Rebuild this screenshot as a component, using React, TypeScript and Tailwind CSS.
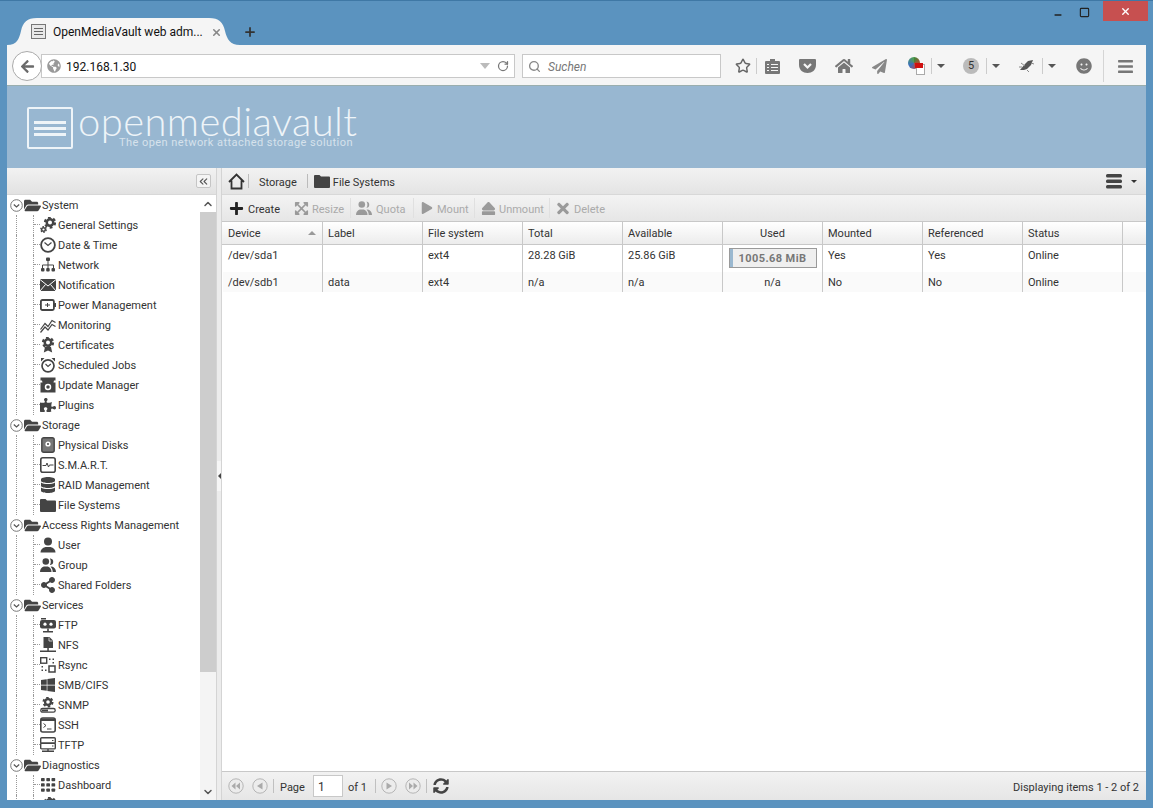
import React from "react";
import { FaPuzzlePiece, FaDatabase, FaShareAlt, FaWindows, FaFolderOpen, FaHome, FaPaperPlane, FaPlus, FaPlay, FaEject, FaTimes, FaExpandArrowsAlt, FaBars, FaSyncAlt, FaArrowLeft, FaSmile, FaGlobeAmericas } from "react-icons/fa";
import { ChevronUp, ChevronDown, ChevronsLeft, Star, RotateCw, Search, X, Plus, Minus, Square } from "lucide-react";

const C = "#444444";
const S = ({ children, size = 16 }: { children: React.ReactNode; size?: number }) => (
  <svg width={size} height={size} viewBox="0 0 16 16" className="shrink-0" fill={C} stroke="none">{children}</svg>
);
const Gear = ({ x, y, r }: { x: number; y: number; r: number }) => (
  <g>
    <circle cx={x} cy={y} r={r} fill="none" stroke={C} strokeWidth={r * 0.45} strokeDasharray={`${r * 0.55} ${r * 0.5}`} />
    <circle cx={x} cy={y} r={r * 0.65} fill="none" stroke={C} strokeWidth={r * 0.5} />
  </g>
);
const Users = (
  <S>
    <circle cx="5.800" cy="4.500" r="3.300" />
    <path d="M0 15c0-3 1.500-4.500 3.800-5.500h4C10 10.500 11.500 12 11.500 15z" />
    <path d="M10.500 1.500a3.300 3.300 0 0 1 0 6.500c-.3 0-.6 0-.6 0 .6-1 .9-2 .9-3.200s-.3-2.300-.9-3.200zM12 9.500c2.300 1 4 2.500 4 5.500h-3.300c0-2.200-.8-4-2.200-5.200z" />
  </S>
);
const Ico: Record<string, React.ReactNode> = {
  gear: <S><Gear x={10} y={5.500} r={5} /><Gear x={3.500} y={12.500} r={2.800} /></S>,
  clock: <S><circle cx="8" cy="8" r="6.900" fill="none" stroke={C} strokeWidth="1.800" /><path d="M4.500 5.500 8 8.500 11.500 5.500" fill="none" stroke={C} strokeWidth="1.200" /></S>,
  net: <S><rect x="6" y="0.500" width="4" height="3.500" rx="1" /><path d="M8 4v4M2.500 11V8h11v3M8 8v3" fill="none" stroke={C} strokeWidth="1" /><rect x="1" y="11" width="3.500" height="3.500" rx="1" /><rect x="6.200" y="11" width="3.500" height="3.500" rx="1" /><rect x="11.500" y="11" width="3.500" height="3.500" rx="1" /></S>,
  mail: <S><rect x="0" y="2" width="16" height="12" /><path d="M0 2.500 8 9l8-6.500M0 14l5.500-6.500M16 14l-5.500-6.500" fill="none" stroke="#fff" strokeWidth="1" /></S>,
  power: <S><rect x="0.900" y="3" width="13" height="10" rx="1.500" fill="none" stroke={C} strokeWidth="1.800" /><path d="M14.500 6.500H16v3h-1.500zM5 8h5M7.500 6v4" stroke={C} strokeWidth="1" /></S>,
  mon: <S><path d="M0.500 12.500 5 6.500l3 3 4-6 3.500 2" fill="none" stroke={C} strokeWidth="1.200" /><path d="M0.500 15.500 5 10l3 3 4-5.500 3.500 2" fill="none" stroke={C} strokeWidth="1.200" /></S>,
  cert: <S><Gear x={8} y={5.500} r={5} /><path d="M5 10 3.800 15.500 8 13.500l4.200 2L11 10z" /></S>,
  sched: <S><circle cx="8" cy="8.800" r="6" fill="none" stroke={C} strokeWidth="1.700" /><path d="M5.500 7 8 9.500 10.800 7" fill="none" stroke={C} strokeWidth="1.100" /><path d="M1 4.500 4.500 1 1 1zM15 4.500 11.500 1 15 1z" /></S>,
  upd: <S><path d="M0.500 0.500h15v3H14l-.5 2h2v10H.5v-10h2L2 3.500H.5z" /><circle cx="8" cy="10" r="2.500" fill="none" stroke="#fff" strokeWidth="1.500" /></S>,
  disk: <S><rect x="1.800" y="0.700" width="12.400" height="14.600" rx="2" fill="#777" stroke={C} strokeWidth="1.400" /><circle cx="8" cy="7" r="2.600" fill="#fff" /><circle cx="8" cy="7" r="1" fill={C} /></S>,
  smart: <S><rect x="0.800" y="0.800" width="14.400" height="14.400" rx="2" fill="none" stroke={C} strokeWidth="1.600" /><path d="M2.500 8.500H6l1-2.500 1.500 4 1-2h4" fill="none" stroke={C} strokeWidth="1" /></S>,
  folder: <S><path d="M0 3a1 1 0 0 1 1-1h4.500l1.500 1.500h8a1 1 0 0 1 1 1V14a1 1 0 0 1-1 1H1a1 1 0 0 1-1-1z" /></S>,
  ftp: <S><path d="M1 1h5v1.500H1z" /><rect x="0" y="3" width="16" height="8.500" rx="2" /><circle cx="5" cy="7.200" r="1.600" fill="#fff" /><circle cx="11" cy="7.200" r="1.600" fill="#fff" /><path d="M7.200 11.500h1.600V14H13v1.500H3V14h4.200z" /></S>,
  nfs: <S><path d="M3.500 0h6L13 3.500V11H3.500z" /><path d="M9 .5v3.500h3.500" fill="none" stroke="#fff" strokeWidth=".7" /><path d="M7.300 11h1.500v2.500H16V15H0v-1.500h7.300z" /></S>,
  rsync: <S><rect x="0.700" y="0.700" width="6" height="5.500" fill="none" stroke={C} strokeWidth="1.400" /><rect x="9" y="9" width="6" height="6" fill="none" stroke={C} strokeWidth="1.500" /><path d="M9 1.500h1.500V3H9zM12.500 1.500H14V3h-1.500zM12.500 5h1.500v1.500h-1.500zM1.500 9H3v1.500H1.500zM1.500 12.500H3V14H1.500zM5 12.500h1.500V14H5z" /></S>,
  snmp: <S><Gear x={8} y={5} r={4.500} /><rect x="0.800" y="11.500" width="14.400" height="3.700" rx="1.800" fill="none" stroke={C} strokeWidth="1.300" /><rect x="2" y="12.500" width="6" height="2" /></S>,
  ssh: <S><rect x="0.800" y="1" width="14.400" height="14" rx="2" fill="none" stroke={C} strokeWidth="1.600" /><path d="M1 1.500h14V4H1z" /><path d="M3.500 6.500 6 8.500 3.500 10.500M7 12h4.500" fill="none" stroke={C} strokeWidth="1" /></S>,
  tftp: <S><rect x="0.700" y="0.700" width="14.600" height="5.600" rx="1" fill="none" stroke={C} strokeWidth="1.400" /><rect x="0.700" y="6.300" width="14.600" height="5.600" rx="1" fill="none" stroke={C} strokeWidth="1.400" /><path d="M12 3h1.500v1H12zM12 8.500h1.500v1H12zM7.300 12h1.400v1.500H14V15H2v-1.500h5.300z" /></S>,
  dash: <S>{[1, 6.300, 11.500].flatMap((y) => [1, 6.300, 11.500].map((x) => <rect key={`${x}${y}`} x={x} y={y} width="3.700" height="3.300" rx=".7" />))}</S>,
  plug: <FaPuzzlePiece size={16} color={C} className="shrink-0" />,
  raid: <FaDatabase size={16} color={C} className="shrink-0" />,
  user: <S><circle cx="8" cy="4.500" r="4" /><path d="M0.500 15.500c0-3 2-4.500 5-5.500h5c3 1 5 2.500 5 5.500z" /></S>,
  group: Users,
  share: <FaShareAlt size={16} color={C} className="shrink-0" />,
  smb: <FaWindows size={16} color={C} className="shrink-0" />,
};

type Row = { root?: boolean; t: string; i?: string };
const rows: Row[] = [
  { root: true, t: "System" },
  { t: "General Settings", i: "gear" }, { t: "Date & Time", i: "clock" }, { t: "Network", i: "net" }, { t: "Notification", i: "mail" },
  { t: "Power Management", i: "power" }, { t: "Monitoring", i: "mon" }, { t: "Certificates", i: "cert" }, { t: "Scheduled Jobs", i: "sched" },
  { t: "Update Manager", i: "upd" }, { t: "Plugins", i: "plug" },
  { root: true, t: "Storage" },
  { t: "Physical Disks", i: "disk" }, { t: "S.M.A.R.T.", i: "smart" }, { t: "RAID Management", i: "raid" }, { t: "File Systems", i: "folder" },
  { root: true, t: "Access Rights Management" },
  { t: "User", i: "user" }, { t: "Group", i: "group" }, { t: "Shared Folders", i: "share" },
  { root: true, t: "Services" },
  { t: "FTP", i: "ftp" }, { t: "NFS", i: "nfs" }, { t: "Rsync", i: "rsync" }, { t: "SMB/CIFS", i: "smb" }, { t: "SNMP", i: "snmp" }, { t: "SSH", i: "ssh" }, { t: "TFTP", i: "tftp" },
  { root: true, t: "Diagnostics" },
  { t: "Dashboard", i: "dash" }, { t: "", i: "gear" },
];

function TreeRow({ r }: { r: Row }) {
  if (r.root)
    return (
      <div className="flex h-5 shrink-0 items-center pl-[3px]">
        <svg width="13" height="13" viewBox="0 0 13 13" className="shrink-0">
          <circle cx="6.500" cy="6.500" r="5.800" fill="#fff" stroke="#777" strokeWidth="1" />
          <path d="M3.800 5.500 6.500 8l2.700-2.500" fill="none" stroke="#555" strokeWidth="1.200" />
        </svg>
        <FaFolderOpen size={17} color={C} className="ml-[1px] shrink-0" />
        <span className="ml-[1px] whitespace-nowrap pt-[2px]">{r.t}</span>
      </div>
    );
  return (
    <div className="flex h-5 shrink-0 items-center pl-[9px]">
      <div className="h-full w-[17px] shrink-0 border-l border-dotted border-[#999]" />
      <div className="h-full w-[7px] shrink-0 border-l border-dotted border-[#999]">
        <div className="h-[10px] border-b border-dotted border-[#999]" />
      </div>
      <span className="flex w-[16px] shrink-0 items-center justify-center">{Ico[r.i!]}</span>
      <span className="ml-[2px] whitespace-nowrap pt-[2px]">{r.t}</span>
    </div>
  );
}

const cols = [
  { t: "Device", sort: true }, { t: "Label" }, { t: "File system" }, { t: "Total" }, { t: "Available" },
  { t: "Used", c: true }, { t: "Mounted" }, { t: "Referenced" }, { t: "Status" },
];
const data = [
  ["/dev/sda1", "", "ext4", "28.28 GiB", "25.86 GiB", "BAR", "Yes", "Yes", "Online"],
  ["/dev/sdb1", "data", "ext4", "n/a", "n/a", "n/a", "No", "No", "Online"],
];

const TB = ({ icon, label, off, w, sep, gap = "gap-[3px]" }: { icon: React.ReactNode; label: string; off?: boolean; w: string; sep?: boolean; gap?: string }) => (
  <div className={`flex h-[22px] shrink-0 items-center ${gap} ${w}`}>
    <span className={`flex w-4 justify-center ${off ? "opacity-40" : ""}`}>{icon}</span>
    <span className={`pt-[3px] ${off ? "text-[#aaa]" : ""}`}>{label}</span>
    {sep && <span className="ml-auto mr-[5px] h-[20px] w-px bg-[#e0e0e0]" />}
  </div>
);
const PagerBtn = ({ d }: { d: string }) => (
  <svg width="16" height="16" viewBox="0 0 16 16" className="shrink-0">
    <circle cx="8" cy="8" r="7.200" fill="#ececec" stroke="#b5b5b5" strokeWidth="1" />
    <path d={d} fill="#aaa" />
  </svg>
);
const Caret = () => <div className="h-0 w-0 border-x-[4px] border-t-[4px] border-x-transparent border-t-[#555]" />;

export default function App() {
  return (
    <div className="flex h-[808px] w-[1153px] flex-col overflow-hidden border-t border-[#3f78a5] bg-[#5b93bf] font-['Roboto','Liberation_Sans',sans-serif] text-[11px] leading-[16px] text-[#333]">
      {/* title bar */}
      <div className="flex h-[44px] shrink-0 items-start">
        <div className="flex flex-1 items-start pl-[7px] pt-[17px]">
          <div className="relative flex h-[27px] w-[233px] items-center pl-[24px] pr-[20px]">
            <svg width="233" height="27" viewBox="0 0 233 27" className="absolute left-0 top-0">
              <path d="M0 27c10 0 12-6 14-14C16 4 20 0 30 0h172c10 0 14 4 16 13 2 8 5 14 15 14z" fill="#f5f5f5" />
            </svg>
            <span className="relative flex h-[15px] w-[15px] shrink-0 flex-col justify-center gap-[2px] border border-[#777] bg-[#e8e8e8] px-[2px]">
              <i className="h-px bg-[#666]" /><i className="h-px bg-[#666]" /><i className="h-px bg-[#666]" />
            </span>
            <span className="relative ml-[7px] whitespace-nowrap text-[12px] text-[#111]">OpenMediaVault web adm...</span>
            <X size={11} strokeWidth={3.500} color="#888" className="absolute left-[204px] top-[9px]" />
          </div>
          <Plus size={14} strokeWidth={3} color="#333" className="ml-[3px] mt-[7px]" />
        </div>
        <div className="flex items-start pr-[5px]">
          <Minus size={10} strokeWidth={3.500} color="#222" className="mr-[16px] mt-[9px]" />
          <Square size={11} strokeWidth={2.500} color="#222" className="mr-[13px] mt-[6px]" />
          <div className="flex h-[20px] w-[45px] items-center justify-center bg-[#c75050]">
            <X size={11} strokeWidth={3} color="#fff" />
          </div>
        </div>
      </div>

      {/* browser content */}
      <div className="mx-[7px] flex min-h-0 flex-1 flex-col">
        {/* nav bar */}
        <div className="flex h-[41px] shrink-0 items-center border-b border-[#9aaeae] bg-[#f5f5f5] pl-[5px] pt-[2px]">
          <div className="z-10 flex h-[30px] w-[30px] shrink-0 items-center justify-center rounded-full border border-[#aaa] bg-white">
            <FaArrowLeft size={15} color="#6a6a6a" />
          </div>
          <div className="-ml-[1px] flex h-[24px] w-[474px] items-center border border-[#c8c8c8] bg-white pl-[5px]">
            <FaGlobeAmericas size={14} color="#999" />
            <span className="ml-[5px] flex-1 pt-[2px] text-[12px] text-[#111]">192.168.1.30</span>
            <div className="mr-[7px] h-0 w-0 border-x-[5px] border-t-[6px] border-x-transparent border-t-[#bbb]" />
            <RotateCw size={12} strokeWidth={2.500} color="#777" className="mr-[5px]" />
          </div>
          <div className="ml-[7px] flex h-[24px] w-[199px] items-center border border-[#c8c8c8] bg-white pl-[5px]">
            <Search size={13} strokeWidth={2.500} color="#888" />
            <span className="ml-[7px] pt-[2px] text-[12px] italic text-[#777]">Suchen</span>
          </div>
          <div className="ml-[13px] flex h-full flex-1 items-center">
            <Star size={16} strokeWidth={2.200} color="#666" className="ml-[1px]" />
            <div className="ml-[5px] h-[16px] w-px bg-[#ccc]" />
            <svg width="15" height="16" viewBox="0 0 15 16" className="ml-[8px]"><path d="M1 3h4V1h5v2h4a1 1 0 0 1 1 1v11a1 1 0 0 1-1 1H1a1 1 0 0 1-1-1V4a1 1 0 0 1 1-1z" fill="#777" /><path d="M2 6.500h2M6 6.500h7M2 9.500h2M6 9.500h7M2 12.500h2M6 12.500h7" stroke="#f5f5f5" strokeWidth="1.200" /></svg>
            <svg width="17" height="16" viewBox="0 0 17 16" className="ml-[19px]"><path d="M1 1h15a1 1 0 0 1 1 1v5c0 5-4 8-8.500 8S0 12 0 7V2a1 1 0 0 1 1-1z" fill="#777" /><path d="M5 6l3.500 3.500L12 6" fill="none" stroke="#f5f5f5" strokeWidth="2.200" /></svg>
            <FaHome size={18} color="#777" className="ml-[19px]" />
            <FaPaperPlane size={15} color="#888" className="ml-[19px]" />
            <span className="relative ml-[21px] h-[18px] w-[17px]">
              <span className="block h-[12px] w-[12px] rounded-full bg-[conic-gradient(#3a8a3a,#d04030,#3a6fc0,#50a050)]" />
              <span className="absolute bottom-0 right-0 h-[11px] w-[9px] border border-[#aaa] bg-white" />
              <span className="absolute right-[2px] top-[6px] h-[5px] w-[8px] bg-[#d01010]" />
            </span>
            <div className="ml-[6px] h-[16px] w-px bg-[#ccc]" />
            <span className="ml-[5px]"><Caret /></span>
            <span className="ml-[18px] flex h-[16px] w-[16px] items-center justify-center rounded-full bg-[#bbb] text-[11px] text-[#333]">5</span>
            <div className="ml-[7px] h-[16px] w-px bg-[#ccc]" />
            <span className="ml-[5px]"><Caret /></span>
            <svg width="16" height="14" viewBox="0 0 16 14" className="ml-[19px]"><path d="M1 11 6 5l3-3 5-1-2 5-4 4-3 1z" fill="#555" /><path d="M2 4l4 3M8 11l2 2M12 4l3 1M3 8 0 8" stroke="#888" strokeWidth="1" /></svg>
            <div className="ml-[7px] h-[16px] w-px bg-[#ccc]" />
            <span className="ml-[5px]"><Caret /></span>
            <FaSmile size={16} color="#777" className="ml-[20px]" />
            <div className="ml-[11px] h-[32px] w-px bg-[#d5d5d5]" />
            <FaBars size={17} color="#777" className="ml-[13px]" />
          </div>
        </div>

        {/* OMV header */}
        <div className="flex h-[82px] shrink-0 items-start bg-[#98b7d1] pl-[20px] pt-[21px]">
          <div className="flex h-[42px] w-[46px] shrink-0 flex-col justify-center gap-[3px] rounded-[2px] border-2 border-[#eef4f8] px-[5px]">
            <i className="h-[3px] bg-[#eef4f8]" /><i className="h-[3px] bg-[#eef4f8]" /><i className="h-[3px] bg-[#eef4f8]" />
          </div>
          <div className="ml-[5px] flex flex-col">
            <span className="-mt-[9px] h-[47px] font-['Lato',sans-serif] text-[40px] font-light leading-[47px] tracking-[0.4px] text-[#eef4f8]">openmediavault</span>
            <span className="-mt-[9px] ml-[41px] whitespace-nowrap font-['Roboto',sans-serif] text-[11px] leading-[14px] tracking-[0.45px] text-[#d6e2ec]">The open network attached storage solution</span>
          </div>
        </div>

        {/* workspace */}
        <div className="flex min-h-0 flex-1 bg-white">
          {/* left */}
          <div className="flex w-[209px] shrink-0 flex-col">
            <div className="flex h-[27px] shrink-0 items-center justify-end border-b border-[#d8d8d8] bg-gradient-to-b from-[#f2f2f2] to-[#e2e2e2] pr-[5px]">
              <div className="flex h-[14px] w-[15px] items-center justify-center rounded-[2px] border border-[#c5c5c5] bg-[#f4f4f4]">
                <ChevronsLeft size={13} strokeWidth={2} color="#555" />
              </div>
            </div>
            <div className="flex min-h-0 flex-1">
              <div className="min-w-0 flex-1 overflow-hidden">
                <div className="flex flex-col">{rows.map((r, i) => <TreeRow key={i} r={r} />)}</div>
              </div>
              <div className="flex w-[16px] shrink-0 flex-col bg-[#f4f4f4]">
                <div className="flex h-[17px] shrink-0 items-center justify-center bg-white"><ChevronUp size={12} strokeWidth={3} color="#555" /></div>
                <div className="h-[460px] shrink-0 bg-[#cdcdcd]" />
                <div className="flex-1" />
                <div className="flex h-[17px] shrink-0 items-center justify-center"><ChevronDown size={12} strokeWidth={3} color="#555" /></div>
              </div>
            </div>
          </div>

          {/* splitter */}
          <div className="flex w-[6px] shrink-0 items-center justify-center border-x border-[#d4d4d4] bg-[#ececec]">
            <div className="flex h-[30px] w-[4px] -translate-y-[8px] items-center justify-center bg-[#f6f6f6]">
              <div className="h-0 w-0 border-y-[3px] border-r-[3px] border-y-transparent border-r-[#444]" />
            </div>
          </div>

          {/* right */}
          <div className="flex min-w-0 flex-1 flex-col">
            <div className="flex h-[27px] shrink-0 items-center border-b border-[#d8d8d8] bg-gradient-to-b from-[#f2f2f2] to-[#e4e4e4] pl-[6px] pr-[9px]">
              <svg width="17" height="17" viewBox="0 0 17 17"><path d="M1 9 8.500 1.500 16 9M3.500 7.500V15.500h10V7.500" fill="none" stroke="#333" strokeWidth="1.800" /></svg>
              <div className="ml-[3px] h-[14px] w-px bg-[#bbb]" />
              <span className="ml-[10px] pt-[3px]">Storage</span>
              <div className="ml-[10px] h-[14px] w-px bg-[#bbb]" />
              <span className="ml-[6px]">{Ico.folder}</span>
              <span className="ml-[3px] pt-[3px]">File Systems</span>
              <span className="flex-1" />
              <svg width="16" height="15" viewBox="0 0 16 15"><rect width="16" height="3.500" rx="1.500" y="0" fill="#444" /><rect width="16" height="3.500" rx="1.500" y="5.500" fill="#444" /><rect width="16" height="3.500" rx="1.500" y="11" fill="#444" /></svg>
              <span className="ml-[9px]"><div className="h-0 w-0 border-x-[3px] border-t-[3px] border-x-transparent border-t-[#333]" /></span>
            </div>
            <div className="flex h-[26px] shrink-0 items-center bg-gradient-to-b from-[#f3f3f3] to-[#e6e6e6] pl-[6px]">
              <TB w="w-[65px]" gap="gap-[4px]" icon={<FaPlus size={15} color="#222" />} label="Create" />
              <TB w="w-[63px]" sep off icon={<FaExpandArrowsAlt size={15} color="#222" />} label="Resize" />
              <TB w="w-[63px]" sep off gap="gap-[4px]" icon={<svg width="16" height="16" viewBox="0 0 16 16" fill="#222"><circle cx="5.800" cy="4.500" r="3.300" /><path d="M0 15c0-3 1.500-4.500 3.800-5.500h4C10 10.500 11.500 12 11.500 15z" /><path d="M10.500 1.500a3.300 3.300 0 0 1 0 6.500c.6-1 .9-2 .9-3.200s-.3-2.300-.9-3.300zM12 9.500c2.300 1 4 2.500 4 5.500h-3.300c0-2.200-.8-4-2.200-5.200z" /></svg>} label="Quota" />
              <TB w="w-[61px]" sep off gap="gap-[2px]" icon={<FaPlay size={12} color="#222" />} label="Mount" />
              <TB w="w-[75px]" sep off icon={<FaEject size={15} color="#222" />} label="Unmount" />
              <TB w="w-[60px]" off icon={<FaTimes size={17} color="#222" />} label="Delete" />
            </div>

            <div className="flex h-[24px] shrink-0 border-y border-[#c8c8c8] bg-gradient-to-b from-[#ffffff] to-[#ececec]">
              <div className="w-px shrink-0" />
              {cols.map((c) => (
                <div key={c.t} className={`flex w-[100px] shrink-0 items-center border-r border-[#c8c8c8] px-[5px] ${c.c ? "justify-center" : ""}`}>
                  <span className="pt-[2px]">{c.t}</span>
                  {c.sort && <span className="ml-auto mr-[1px] h-0 w-0 border-x-[4px] border-b-[4px] border-x-transparent border-b-[#999]" />}
                </div>
              ))}
            </div>

            <div className="min-h-0 flex-1 pl-px">
              {data.map((row, n) => (
                <div key={n} className={`flex ${n === 0 ? "h-[27px] bg-white" : "h-[20px] bg-[#fafafa]"}`}>
                  {row.map((v, i) => (
                    <div key={i} className={`flex w-[100px] shrink-0 border-r border-[#c8c8c8] px-[5px] ${n === 0 ? "pt-[3px]" : "items-center"} ${i === 5 ? "justify-center" : ""}`}>
                      {v === "BAR" ? (
                        <div className="-mx-px flex h-[20px] w-[88px] items-stretch border border-[#9a9a9a] bg-[#efefef]">
                          <div className="w-[3px] bg-[#9ab8d0]" />
                          <span className="flex-1 pr-[3px] pt-[1px] text-center font-bold leading-[18px] tracking-[0.4px] text-[#777]">1005.68 MiB</span>
                        </div>
                      ) : (
                        <span className={n === 1 ? "pt-[2px]" : ""}>{v}</span>
                      )}
                    </div>
                  ))}
                </div>
              ))}
            </div>

            <div className="flex h-[29px] shrink-0 items-center border-t border-[#c8c8c8] bg-gradient-to-b from-[#f2f2f2] to-[#e6e6e6] pl-[6px] pr-[7px]">
              <PagerBtn d="M7.500 4.500v7L3.500 8zM12 4.500v7L8 8z" />
              <span className="ml-[8px]"><PagerBtn d="M10.500 4.500v7L5 8z" /></span>
              <div className="ml-[5px] h-[14px] w-px bg-[#c0c0c0]" />
              <span className="ml-[6px] w-[27px] pt-[3px]">Page</span>
              <div className="ml-[6px] flex h-[22px] w-[30px] items-center border border-[#c8c8c8] bg-white pl-[4px] pt-[1px] text-[12px]">1</div>
              <span className="ml-[5px] w-[20px] pt-[3px]">of 1</span>
              <div className="ml-[7px] h-[14px] w-px bg-[#c0c0c0]" />
              <span className="ml-[5px]"><PagerBtn d="M5.500 4.500v7L11 8z" /></span>
              <span className="ml-[8px]"><PagerBtn d="M4 4.500v7L8 8zM8.500 4.500v7L12.500 8z" /></span>
              <div className="ml-[5px] h-[14px] w-px bg-[#c0c0c0]" />
              <FaSyncAlt size={16} color="#444" className="ml-[6px]" />
              <span className="ml-auto pt-[3px]">Displaying items 1 - 2 of 2</span>
            </div>
          </div>
        </div>
      </div>
      <div className="h-[8px] shrink-0" />
    </div>
  );
}
